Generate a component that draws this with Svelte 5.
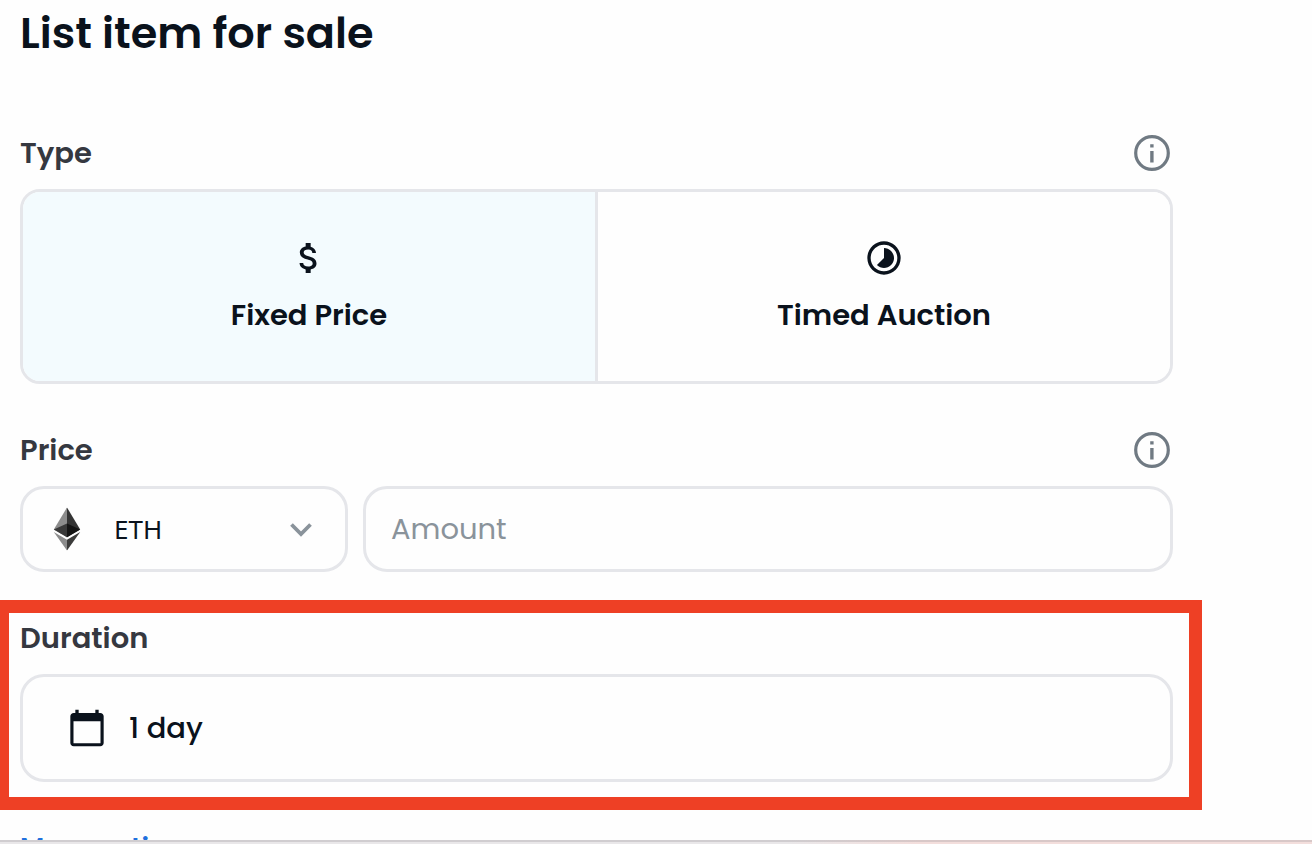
<script>
  let saleType = $state('fixed');
  let currency = $state('ETH');
  let amount = $state('');
  let duration = $state('1 day');
</script>

{#snippet info(label)}
  <button type="button" class="info-btn" aria-label={label}>
    <svg viewBox="0 0 36 36" width="36" height="36" aria-hidden="true">
      <circle cx="18" cy="18" r="16.3" fill="none" stroke="currentColor" stroke-width="3.2" />
      <path d="M16.2 9.2h3.4v3.4h-3.4zM16.2 16h3.4v11.400h-3.4z" fill="currentColor" />
    </svg>
  </button>
{/snippet}

<div class="page">
  <main>
    <h1>List item for sale</h1>

    <form>
      <section>
        <div class="row-head">
          <h2 id="type-label">Type</h2>
          {@render info('About sale types')}
        </div>
        <div class="types" role="group" aria-labelledby="type-label">
          <button
            type="button"
            class:selected={saleType === 'fixed'}
            aria-pressed={saleType === 'fixed'}
            onclick={() => (saleType = 'fixed')}
          >
            <svg viewBox="0 0 24 24" width="40" height="40" aria-hidden="true">
              <path fill="currentColor" d="M11.8 10.9c-2.27-.59-3-1.2-3-2.15 0-1.09 1.01-1.85 2.7-1.85 1.78 0 2.44.85 2.5 2.1h2.21c-.07-1.72-1.12-3.3-3.21-3.81V3h-3v2.16c-1.94.42-3.5 1.68-3.5 3.61 0 2.31 1.91 3.46 4.7 4.13 2.5.6 3 1.48 3 2.41 0 .69-.49 1.79-2.7 1.79-2.06 0-2.87-.92-2.98-2.1h-2.2c.12 2.19 1.76 3.42 3.68 3.83V21h3v-2.15c1.95-.37 3.5-1.5 3.5-3.55 0-2.84-2.43-3.81-4.7-4.4z" />
            </svg>
            <span>Fixed Price</span>
          </button>
          <button
            type="button"
            class:selected={saleType === 'auction'}
            aria-pressed={saleType === 'auction'}
            onclick={() => (saleType = 'auction')}
          >
            <svg viewBox="0 0 24 24" width="40" height="40" aria-hidden="true">
              <path fill="currentColor" d="M16.24 7.76C15.07 6.59 13.54 6 12 6v6l-4.24 4.24c2.34 2.34 6.14 2.34 8.49 0 2.34-2.34 2.34-6.14-.01-8.48zM12 2C6.48 2 2 6.48 2 12s4.48 10 10 10 10-4.48 10-10S17.52 2 12 2zm0 18c-4.42 0-8-3.58-8-8s3.58-8 8-8 8 3.58 8 8-3.58 8-8 8z" />
            </svg>
            <span>Timed Auction</span>
          </button>
        </div>
      </section>

      <section>
        <div class="row-head">
          <h2><label for="amount">Price</label></h2>
          {@render info('About the price')}
        </div>
        <div class="price">
          <div class="currency">
            <svg class="eth" viewBox="0 0 256 417" width="28" height="43" aria-hidden="true">
              <path fill="#343434" d="M127.96 0l-2.8 9.5v275.67l2.8 2.79 127.96-75.64z" />
              <path fill="#8c8c8c" d="M127.96 0L0 212.32l127.96 75.64V154.16z" />
              <path fill="#3c3c3b" d="M127.96 312.19l-1.58 1.92v98.2l1.58 4.6L256 236.59z" />
              <path fill="#8c8c8c" d="M127.96 416.9v-104.7L0 236.58z" />
              <path fill="#141414" d="M127.96 287.96l127.96-75.64-127.96-58.16z" />
              <path fill="#393939" d="M0 212.32l127.96 75.64v-133.8z" />
            </svg>
            <select bind:value={currency} aria-label="Currency">
              <option>ETH</option>
              <option>WETH</option>
            </select>
            <svg class="chevron" viewBox="0 0 24 16" width="24" height="16" aria-hidden="true">
              <path d="M2.5 3.5l9.5 9.5 9.5-9.5" fill="none" stroke="currentColor" stroke-width="3.8" />
            </svg>
          </div>
          <input id="amount" type="text" inputmode="decimal" placeholder="Amount" bind:value={amount} />
        </div>
      </section>

      <section class="highlighted">
        <div class="row-head">
          <h2 id="duration-label">Duration</h2>
        </div>
        <button type="button" class="duration" aria-describedby="duration-label">
          <svg viewBox="0 0 24 24" width="40" height="40" aria-hidden="true">
            <path fill="currentColor" d="M20 3h-1V1h-2v2H7V1H5v2H4c-1.1 0-2 .9-2 2v16c0 1.1.9 2 2 2h16c1.1 0 2-.9 2-2V5c0-1.1-.9-2-2-2zm.1 18.2H3.9V8h16.2v13.2z" />
          </svg>
          <span>{duration}</span>
        </button>
      </section>

      <a class="more" href="#more">More options</a>
    </form>
  </main>
  <footer></footer>
</div>

<style>
  :global(body) {
    background: #fefefe;
  }

  .page {
    display: flex;
    flex-direction: column;
    height: 100vh;
    overflow: hidden;
    color: #0a121c;
    font-family: Poppins, Inter, "Open Sans", sans-serif;
    font-size: 29px;
    line-height: 36px;
  }

  main {
    flex: 1;
    min-height: 0;
    overflow: hidden;
    padding: 5px 139px 0 20px;
  }

  h1 {
    margin: 0 0 74px;
    font-size: 43px;
    font-weight: 600;
    line-height: 56px;
  }

  h2 {
    margin: 0;
    color: #353840;
    font-size: 29px;
    font-weight: 600;
  }

  button,
  input,
  select {
    box-sizing: border-box;
    margin: 0;
    font: inherit;
    color: inherit;
  }

  button {
    cursor: pointer;
  }

  svg {
    display: block;
    flex: none;
  }

  form {
    display: flex;
    flex-direction: column;
    gap: 48px;
  }

  .row-head {
    display: flex;
    align-items: center;
    justify-content: space-between;
    height: 36px;
    margin-bottom: 18px;
    padding-right: 3px;
  }

  .info-btn {
    padding: 0;
    border: none;
    background: none;
    color: #707a83;
  }

  .types {
    display: flex;
    overflow: hidden;
    border: 3px solid #e5e6ea;
    border-radius: 20px;
  }

  .types button {
    flex: 1;
    display: flex;
    flex-direction: column;
    align-items: center;
    gap: 19px;
    padding: 46px 0 48px;
    border: none;
    background: #fefefe;
    font-weight: 600;
  }

  .types button + button {
    border-left: 3px solid #e5e6ea;
  }

  .types .selected {
    background: #f3fbfe;
  }

  .price {
    display: flex;
    gap: 15px;
  }

  .currency {
    position: relative;
    flex: none;
    width: 328px;
  }

  .currency svg {
    position: absolute;
    top: 50%;
    transform: translateY(-50%);
    pointer-events: none;
  }

  .eth {
    left: 33px;
  }

  .chevron {
    right: 35px;
    color: #8a939b;
  }

  select,
  input {
    width: 100%;
    height: 86px;
    border: 3px solid #e5e6ea;
    border-radius: 24px;
    background: #fefefe;
  }

  select {
    appearance: none;
    padding: 0 70px 0 91px;
    font-family: "Noto Sans", sans-serif;
    font-size: 26px;
  }

  input {
    flex: 1;
    min-width: 0;
    padding: 0 25px;
  }

  input::placeholder {
    color: #8a939b;
    opacity: 1;
  }

  .highlighted {
    position: relative;
  }

  .highlighted::after {
    content: "";
    position: absolute;
    inset: -20px -29px -28px -24px;
    border: 13px solid #ee4025;
    pointer-events: none;
  }

  .duration {
    display: flex;
    align-items: center;
    gap: 22px;
    width: 100%;
    height: 108px;
    padding: 0 44px;
    border: 3px solid #e5e6ea;
    border-radius: 24px;
    background: #fefefe;
    font-weight: 500;
  }

  .more {
    align-self: flex-start;
    color: #2070dd;
    font-size: 27px;
    font-weight: 600;
    text-decoration: none;
  }

  footer {
    flex: none;
    height: 2px;
    border-top: 2px solid #d0cdd0;
    border-image: linear-gradient(to right, #d0cdd0 60%, #d8c8c8 70%) 1;
    background: linear-gradient(to right, #e9e7e9 60%, #f3dedc 70%);
  }
</style>
